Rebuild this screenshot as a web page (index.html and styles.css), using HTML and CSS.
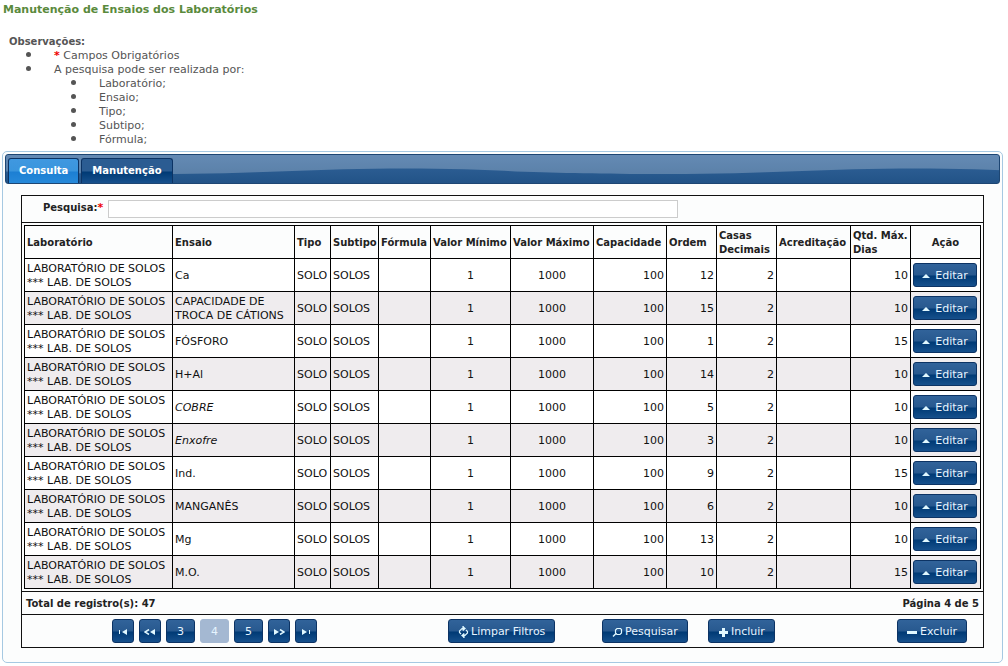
FILE: index.html
```
<!DOCTYPE html>
<html lang="pt-BR">
<head>
<meta charset="utf-8">
<title>Manutenção de Ensaios dos Laboratórios</title>
<link rel="stylesheet" href="styles.css">
</head>
<body>
<h1 class="title">Manutenção de Ensaios dos Laboratórios</h1>
<section class="notes">
  <h2 class="notes-title">Observações:</h2>
  <ul class="list">
    <li><span class="req">*</span> Campos Obrigatórios</li>
    <li>A pesquisa pode ser realizada por:
      <ul class="list">
        <li>Laboratório;</li>
        <li>Ensaio;</li>
        <li>Tipo;</li>
        <li>Subtipo;</li>
        <li>Fórmula;</li>
      </ul>
    </li>
  </ul>
</section>
<main class="panel">
  <div class="bar" role="tablist">
    <button class="tab tab-active" type="button" role="tab" aria-selected="true">Consulta</button>
    <button class="tab" type="button" role="tab" aria-selected="false">Manutenção</button>
  </div>
  <div class="box">
    <div class="search">
      <label class="search-label" for="pesquisa">Pesquisa:<span class="req">*</span></label>
      <input class="search-input" id="pesquisa" type="text">
    </div>
    <div class="grid-wrap">
      <table class="grid">
        <colgroup>
          <col class="c-lab"><col class="c-ensaio"><col class="c-tipo"><col class="c-subtipo"><col class="c-formula"><col class="c-min"><col class="c-max"><col class="c-cap"><col class="c-ordem"><col class="c-casas"><col class="c-acred"><col class="c-dias"><col class="c-acao">
        </colgroup>
        <thead>
          <tr><th>Laboratório</th><th>Ensaio</th><th>Tipo</th><th>Subtipo</th><th>Fórmula</th><th>Valor Mínimo</th><th>Valor Máximo</th><th>Capacidade</th><th>Ordem</th><th>Casas<br>Decimais</th><th>Acreditação</th><th>Qtd. Máx.<br>Dias</th><th class="mid">Ação</th></tr>
        </thead>
        <tbody id="rows"></tbody>
      </table>
    </div>
    <div class="summary"><span>Total de registro(s): 47</span><span>Página 4 de 5</span></div>
    <div class="tools">
      <nav class="pager" aria-label="Páginas">
        <button class="btn btn-nav" type="button" aria-label="Primeira página"><svg width="10" height="6" viewBox="0 0 10 6"><path d="M1 1h1v4H1zM9 0v6L4 3z"/></svg></button>
        <button class="btn btn-nav" type="button" aria-label="Página anterior"><svg width="12" height="6" viewBox="0 0 12 6"><path d="M11 0v6L6 3z"/><path class="line" d="M5 .5L1 3l4 2.500"/></svg></button>
        <button class="btn btn-page" type="button">3</button>
        <button class="btn btn-page btn-current" type="button" disabled>4</button>
        <button class="btn btn-page" type="button">5</button>
        <button class="btn btn-nav" type="button" aria-label="Próxima página"><svg width="12" height="6" viewBox="0 0 12 6"><path d="M1 0v6l5-3z"/><path class="line" d="M7 .5L11 3 7 5.500"/></svg></button>
        <button class="btn btn-nav" type="button" aria-label="Última página"><svg width="10" height="6" viewBox="0 0 10 6"><path d="M8 1h1v4H8zM1 0v6l5-3z"/></svg></button>
      </nav>
      <div><button class="btn" type="button"><svg width="11" height="12" viewBox="0 0 11 12"><path class="line thin" d="M7 2.500H4L1.500 5v1.500L3 8M5 0v4.500M4 9.500h3L9.500 7V5.500L8 4M6 7.500V12"/><path d="M5 0l3 2.500L5 5zM6 7v5L3 9.500z"/></svg>Limpar Filtros</button></div>
      <div><button class="btn" type="button"><svg width="11" height="11" viewBox="0 0 11 11"><path class="line thin" d="M5 1.500h3.500l1 1V6L8 7.500H5L3.500 6V3z"/><path class="line" d="M4 6.500L1 9.500"/></svg>Pesquisar</button></div>
      <div class="tools-end">
        <button class="btn" type="button"><svg width="11" height="9" viewBox="0 0 11 9"><path d="M4 0h3v3h3v3H7v3H4V6H1V3h3z"/></svg>Incluir</button>
        <button class="btn" type="button"><svg width="11" height="9" viewBox="0 0 11 9"><path d="M0 3h10v3H0z"/></svg>Excluir</button>
      </div>
    </div>
  </div>
</main>
<script src="rows.js"></script>
</body>
</html>
```
FILE: rows.js
```
const rows = [
  ["Ca", 12, 10],
  ["CAPACIDADE DE TROCA DE CÁTIONS", 15, 10],
  ["FÓSFORO", 1, 15],
  ["H+Al", 14, 10],
  ["<i>COBRE</i>", 5, 10],
  ["<i>Enxofre</i>", 3, 10],
  ["Ind.", 9, 15],
  ["MANGANÊS", 6, 10],
  ["Mg", 13, 10],
  ["M.O.", 10, 15]
];
document.getElementById("rows").innerHTML = rows.map(([ensaio, ordem, dias]) => `
  <tr>
    <td>LABORATÓRIO DE SOLOS<br>*** LAB. DE SOLOS</td><td>${ensaio}</td><td>SOLO</td><td>SOLOS</td><td></td>
    <td class="mid">1</td><td class="mid">1000</td><td class="num">100</td><td class="num">${ordem}</td>
    <td class="num">2</td><td></td><td class="num">${dias}</td>
    <td class="act"><button class="btn btn-edit" type="button"><svg width="8" height="4" viewBox="0 0 8 4"><path d="M4 0l4 4H0z"/></svg>Editar</button></td>
  </tr>`).join("");
```
FILE: styles.css
```
* { box-sizing: border-box; }
body {
  margin: 0;
  background: #fff;
  color: #111;
  font: 11px/14px Verdana, "DejaVu Sans", sans-serif;
}
.title { margin: 0; padding: 3px 3px 0; color: #5a8a3c; font-size: 11px; line-height: 14px; }
.notes { padding: 18px 9px 4px; color: #555; }
.notes-title { margin: 0; font-size: 10px; line-height: 14px; }
.req { color: #e00; font-size: 11px; font-weight: bold; }
.list { list-style: none; margin: 0; padding-left: 45px; }
.list > li::before {
  content: "";
  display: inline-block;
  width: 5px;
  height: 5px;
  margin: 0 23px 2px -28px;
  border-radius: 50%;
  background: #555;
}

.panel {
  margin: 0 5px 0 2px;
  padding: 2px 2px 14px;
  border: 1px solid #a6c9e2;
  border-radius: 5px;
  background: #fcfdfd;
}
.bar {
  display: flex;
  gap: 2px;
  height: 30px;
  padding: 3px 2px 0;
  border: 1px solid #1d4673;
  border-radius: 3px;
  background:
    url("data:image/svg+xml,%3Csvg xmlns='http://www.w3.org/2000/svg' width='510' height='28'%3E%3Cpath fill='%23ffffff' fill-opacity='.24' d='M0 0H510V16.500C480 14.500 440 13.500 400 13.500C310 13.500 250 19 150 19C80 19 50 18 0 16.500z'/%3E%3C/svg%3E") repeat-x,
    linear-gradient(#33659c, #225387);
}
.tab {
  height: 25px;
  padding: 0 10px;
  border: 1px solid #0c3364;
  border-bottom: 0;
  border-radius: 3px 3px 0 0;
  background: linear-gradient(#2b5c92 0 12px, #003a75 13px, #16508c);
  color: #fff;
  font: bold 10px/14px Verdana, "DejaVu Sans", sans-serif;
}
.tab-active { background: linear-gradient(#4098e0, #3a95dd 12px, #1c7fd3 13px, #2689da); }

.box { margin: 11px 16px 0; border: 1px solid #111; }
.search { display: flex; align-items: center; padding: 4px 21px; gap: 5px; }
.search-label { padding-bottom: 2px; font-size: 10px; font-weight: bold; color: #222; }
.search-input { width: 62%; height: 18px; padding: 0 2px; border: 1px solid #ccc; background: #fff; font: inherit; }
.grid-wrap { padding: 2px; border-top: 1px solid #111; border-bottom: 1px solid #111; }
.grid { width: 100%; table-layout: fixed; border-collapse: collapse; }
.grid th, .grid td { height: 33px; padding: 3px 2px 1px; border: 1px solid #000; text-align: left; vertical-align: middle; }
.grid th { color: #222; font-size: 10px; white-space: nowrap; }
.grid tbody tr { background: #fff; }
.grid tbody tr:nth-child(even) { background: #efecee; }
.grid .mid { text-align: center; }
.grid .num { text-align: right; }
.grid .act { padding: 2px; }
.c-lab { width: 148px; }
.c-ensaio { width: 122px; }
.c-tipo { width: 36px; }
.c-subtipo { width: 48px; }
.c-formula { width: 52px; }
.c-min { width: 80px; }
.c-max { width: 83px; }
.c-cap { width: 73px; }
.c-ordem { width: 50px; }
.c-casas { width: 60px; }
.c-acred { width: 74px; }
.c-dias { width: 60px; }
.c-acao { width: 70px; }

.summary { display: flex; justify-content: space-between; padding: 5px 4px 3px; border-bottom: 1px solid #111; color: #222; font-size: 10px; font-weight: bold; }
.tools { display: grid; grid-template-columns: 426fr 154fr 106fr 275fr; padding: 4px 0; }
.tools > * { display: flex; }
.pager { gap: 5px; padding-left: 90px; }
.tools-end { justify-content: space-between; padding-right: 16px; }

.btn {
  display: inline-flex;
  align-items: center;
  justify-content: center;
  gap: 2px;
  height: 24px;
  padding: 2px 9px 0;
  border: 1px solid #0c3364;
  border-radius: 3px;
  background: linear-gradient(#31639a, #28598f 11px, #003a75 12px, #16508c);
  color: #e6f4ff;
  font: 11px/14px Verdana, "DejaVu Sans", sans-serif;
}
.btn svg { fill: #e0f8ff; flex: none; }
.btn .line { fill: none; stroke: #e0f8ff; stroke-width: 1.5; }
.btn .thin { stroke-width: 1.2; }
.btn-nav { width: 22px; padding: 2px 0 0; }
.btn-page { width: 29px; padding: 2px 0 0; }
.btn-current { border-color: #a4b8d2; background: #a4b8d2; }
.btn-edit { display: flex; width: 64px; padding: 2px 0 0; gap: 5px; }
```
